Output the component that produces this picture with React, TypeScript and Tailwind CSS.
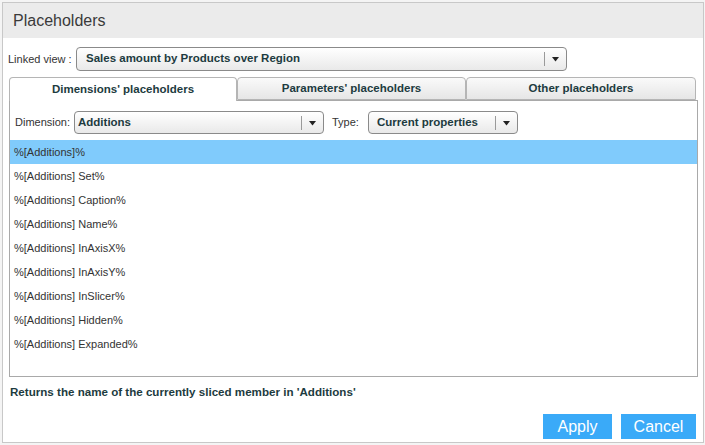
const rows = [
  "%[Additions]%",
  "%[Additions] Set%",
  "%[Additions] Caption%",
  "%[Additions] Name%",
  "%[Additions] InAxisX%",
  "%[Additions] InAxisY%",
  "%[Additions] InSlicer%",
  "%[Additions] Hidden%",
  "%[Additions] Expanded%",
]

function Arrow() {
  return (
    <svg width="9" height="6" viewBox="0 0 9 6">
      <path d="M1 1h7L4.5 5.5z" fill="#222" />
    </svg>
  )
}

function Select({ value, className }: { value: string; className: string }) {
  return (
    <div
      className={
        "flex items-center rounded-[4px] border border-[#8a8a8a] bg-gradient-to-b from-white to-[#e9e9e9] " +
        className
      }
    >
      <span className="flex-1 truncate text-[11.5px] font-bold text-[#1d3b40]">{value}</span>
      <span className="h-[14px] w-px bg-[#9a9a9a]" />
      <span className="flex w-[21px] justify-center">
        <Arrow />
      </span>
    </div>
  )
}

export default function App() {
  return (
    <div className="h-[445px] w-[705px] bg-[#f4f4f4] pt-[2px] pl-[2px] font-['Liberation_Sans',Arial,sans-serif]">
      <div className="flex h-[441px] w-[702px] flex-col border border-[#c8c8c8] bg-white">
        {/* Header */}
        <div className="flex h-[35px] items-center bg-[#ebebeb] pl-[10px] text-[16px] text-[#3a3a3a]">
          Placeholders
        </div>

        {/* Linked view */}
        <div className="mt-[9px] flex items-center pl-[5px]">
          <span className="w-[68px] text-[11px] text-[#333]">Linked view :</span>
          <Select value="Sales amount by Products over Region" className="h-[24px] w-[491px] pl-[9px]" />
        </div>

        {/* Tabs */}
        <div className="mt-[6px] flex pl-[6px]">
          <div className="z-10 -mb-px flex h-[24px] w-[228px] items-center justify-center rounded-t-[4px] border border-b-0 border-[#b5b5b5] bg-white text-[11.5px] font-bold text-[#1d3b40]">
            Dimensions' placeholders
          </div>
          <div className="flex h-[23px] w-[229px] items-center justify-center rounded-t-[4px] border border-[#b5b5b5] bg-gradient-to-b from-[#fafafa] to-[#e6e6e6] text-[11.5px] font-bold text-[#1d3b40]">
            Parameters' placeholders
          </div>
          <div className="flex h-[23px] w-[230px] items-center justify-center rounded-t-[4px] border border-[#b5b5b5] bg-gradient-to-b from-[#fafafa] to-[#e6e6e6] text-[11.5px] font-bold text-[#1d3b40]">
            Other placeholders
          </div>
        </div>

        {/* Panel */}
        <div className="ml-[6px] flex h-[277px] w-[689px] flex-col border border-[#a9a9a9]">
          <div className="flex h-[39px] items-start pt-[10px] pl-[5px]">
            <span className="mt-[3px] w-[59px] text-[11px] text-[#333]">Dimension:</span>
            <Select value="Additions" className="h-[23px] w-[250px] pl-[3px]" />
            <span className="mt-[3px] ml-[8px] w-[36px] text-[11px] text-[#333]">Type:</span>
            <Select value="Current properties" className="h-[23px] w-[150px] pl-[8px]" />
          </div>
          <div className="flex flex-col">
            {rows.map((r, i) => (
              <div
                key={r}
                className={
                  "flex h-[24px] items-center pl-[4px] text-[11px] text-[#333] " +
                  (i === 0 ? "bg-[#80cbfc]" : "")
                }
              >
                {r}
              </div>
            ))}
          </div>
        </div>

        {/* Description */}
        <div className="mt-[6px] pl-[7px] text-[11.6px] font-bold text-[#1d3b40]">
          Returns the name of the currently sliced member in 'Additions'
        </div>

        {/* Buttons */}
        <div className="mt-auto mb-[3px] flex justify-end gap-[9px] pr-[7px]">
          <button className="h-[25px] w-[69px] bg-[#3aaaf8] text-[16px] text-white">Apply</button>
          <button className="h-[25px] w-[75px] bg-[#3aaaf8] text-[16px] text-white">Cancel</button>
        </div>
      </div>
    </div>
  )
}
